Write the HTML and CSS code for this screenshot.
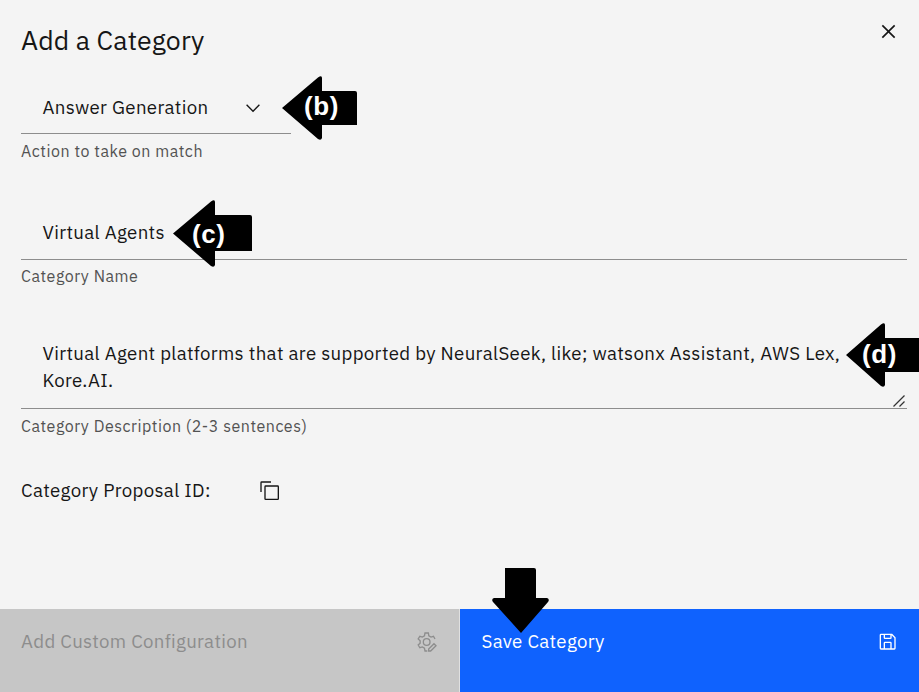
FILE: index.html
```html
<!DOCTYPE html>
<html lang="en">
<head>
<meta charset="utf-8">
<title>Add a Category</title>
<link rel="stylesheet" href="styles.css">
</head>
<body>
<main class="modal">
  <header class="header">
    <h1 class="title">Add a Category</h1>
    <svg class="close" viewBox="0 0 32 32"><path d="M17.4 16 24 9.4 22.6 8 16 14.6 9.4 8 8 9.4 14.6 16 8 22.6 9.4 24 16 17.4 22.6 24 24 22.6Z"/></svg>
  </header>
  <section class="body">
    <div class="field action">
      <div class="control select"><span>Answer Generation</span>
        <svg class="chevron" viewBox="0 0 16 16"><path d="M8 11 3 6l.7-.7L8 9.6l4.3-4.3.7.7z"/></svg>
      </div>
      <div class="helper">Action to take on match</div>
    </div>
    <div class="field name">
      <div class="control"><span>Virtual Agents</span></div>
      <div class="helper">Category Name</div>
    </div>
    <div class="field description">
      <div class="control area">Virtual Agent platforms that are supported by NeuralSeek, like; watsonx Assistant, AWS Lex,<br>Kore.AI.
        <svg class="grip" viewBox="0 0 14 14"><path d="M1.5 12.5 12.5 1.5M7.5 12.5l5-5" /></svg>
      </div>
      <div class="helper">Category Description (2-3 sentences)</div>
    </div>
    <div class="proposal"><span class="pid">Category Proposal ID:</span>
      <svg class="copy" viewBox="0 0 32 32"><path d="M28 10v18H10V10h18m0-2H10a2 2 0 0 0-2 2v18a2 2 0 0 0 2 2h18a2 2 0 0 0 2-2V10a2 2 0 0 0-2-2Z"/><path d="M4 18H2V4a2 2 0 0 1 2-2h14v2H4Z"/></svg>
    </div>
  </section>
  <footer class="footer">
    <div class="btn disabled"><span>Add Custom Configuration</span>
      <svg class="icon" viewBox="0 0 32 32"><g fill="none" stroke="currentColor" stroke-width="2"><path d="M28.5 12 26.2 7.9 22.5 9.2 19.3 7.3 18.5 3h-5l-.8 4.300-3.200 1.900-3.700-1.300L3.300 12l2.900 2.600v3.800L3.300 21l2.500 4.100 3.700-1.300 3.200 1.900.8 4.300H17"/><circle cx="16" cy="16.500" r="5"/><path d="M19 30v-3l8-8 3 3-8 8z"/></g></svg>
    </div>
    <div class="btn primary"><span>Save Category</span>
      <svg class="icon" viewBox="0 0 32 32"><path d="m27.7 9.3-5-5A1 1 0 0 0 22 4H6a2 2 0 0 0-2 2v20a2 2 0 0 0 2 2h20a2 2 0 0 0 2-2V10a1 1 0 0 0-.3-.7ZM12 6h8v4h-8Zm8 20h-8v-8h8Zm2 0v-8a2 2 0 0 0-2-2h-8a2 2 0 0 0-2 2v8H6V6h4v4a2 2 0 0 0 2 2h8a2 2 0 0 0 2-2V6.4l4 4V26Z"/></svg>
    </div>
  </footer>
  <div class="marker m-b"><svg viewBox="0 0 75 64"><path d="M0 32 36 1.5Q40-1 40 2V15H73Q75 15 75 17V49H40V62Q39 65 36 63Z"/></svg><span>(b)</span></div>
  <div class="marker m-c"><svg viewBox="0 0 79 67"><path d="M0 33.500 38 1.500Q42-1 42 2V15H77Q79 15 79 17V51H42V65Q41 68 38 66Z"/></svg><span>(c)</span></div>
  <div class="marker m-d"><svg viewBox="0 0 73 64"><path d="M0 32 35 1.500Q39-1 39 2V15H73V49H39V62Q38 65 35 63Z"/></svg><span>(d)</span></div>
  <div class="marker m-save"><svg viewBox="0 0 57 65"><path d="M13 0H42Q44 0 44 2V30H55Q58 31 56 34L29 65 1 34Q-1 31 2 30H13Z"/></svg></div>
</main>
</body>
</html>
```
FILE: styles.css
```css
* { box-sizing: border-box; }
body { margin: 0; font-family: "IBM Plex Sans", Roboto, sans-serif; color: #161616; }
svg { display: block; fill: currentColor; flex: none; }
.modal { position: relative; width: 919px; height: 692px; background: #f4f4f4; display: flex; flex-direction: column; overflow: hidden; }
.header { height: 81px; padding: 22px 17px 0 21px; display: flex; justify-content: space-between; align-items: flex-start; }
.title { margin: 0; font-size: 26.67px; line-height: 37px; font-weight: 400; white-space: nowrap; letter-spacing: .13px; }
.close { width: 27px; height: 27px; margin-top: -4px; }
.body { flex: 1; padding: 0 12px 0 21px; font-size: 18.67px; line-height: 27px; letter-spacing: .333px; }
.control { height: 53px; padding: 13px 21.5px; border-bottom: 1px solid #8d8d8d; white-space: nowrap; }
.select { width: 270px; display: flex; justify-content: space-between; align-items: flex-start; padding-right: 27px; }
.chevron { width: 22px; height: 22px; margin-top: 3px; }
.field { height: 126px; }
.name .control { padding-top: 12px; }
.name .helper { padding-top: 6px; }
.description .control { position: relative; }
.description { height: 144px; }
.area { height: 76px; padding-top: 7px; }
.grip { position: absolute; right: 1px; bottom: 0; width: 14px; height: 14px; fill: none; stroke: #333; stroke-width: 1.3; }
.helper { font-size: 16px; line-height: 21px; padding-top: 7px; color: #525252; white-space: nowrap; letter-spacing: .525px; }
.proposal { display: flex; align-items: center; height: 27px; }
.pid { width: 238px; }
.copy { width: 21.33px; height: 21.33px; }
.footer { height: 83px; display: flex; gap: 1px; background: #e0e0e0; font-size: 18.67px; line-height: 24px; letter-spacing: .31px; }
.btn { width: 459px; height: 83px; padding: 20px 21px 0 21px; display: flex; justify-content: space-between; align-items: flex-start; }
.primary { padding-left: 21.5px; }
.disabled { background: #c6c6c6; color: #8d8d8d; }
.primary { background: #0f62fe; color: #fff; }
.icon { width: 21.33px; height: 21.33px; margin-top: 2px; }
.disabled .icon { margin-right: 1px; }
.marker { position: absolute; color: #000; }
.marker svg { width: 100%; height: 100%; }
.marker span { position: absolute; left: 22px; top: 14px; font: bold 26px/32px "Liberation Sans", sans-serif; letter-spacing: .6px; color: #fff; }
.m-b { left: 282px; top: 76px; width: 75px; height: 64px; }
.m-c { left: 173px; top: 200px; width: 79px; height: 67px; }
.m-d { left: 846px; top: 323px; width: 73px; height: 64px; }
.m-save { left: 492px; top: 568px; width: 57px; height: 65px; }
.marker.m-d span { left: 16px; top: 15px; }
.marker.m-c span { left: 19px; top: 18px; }
```
